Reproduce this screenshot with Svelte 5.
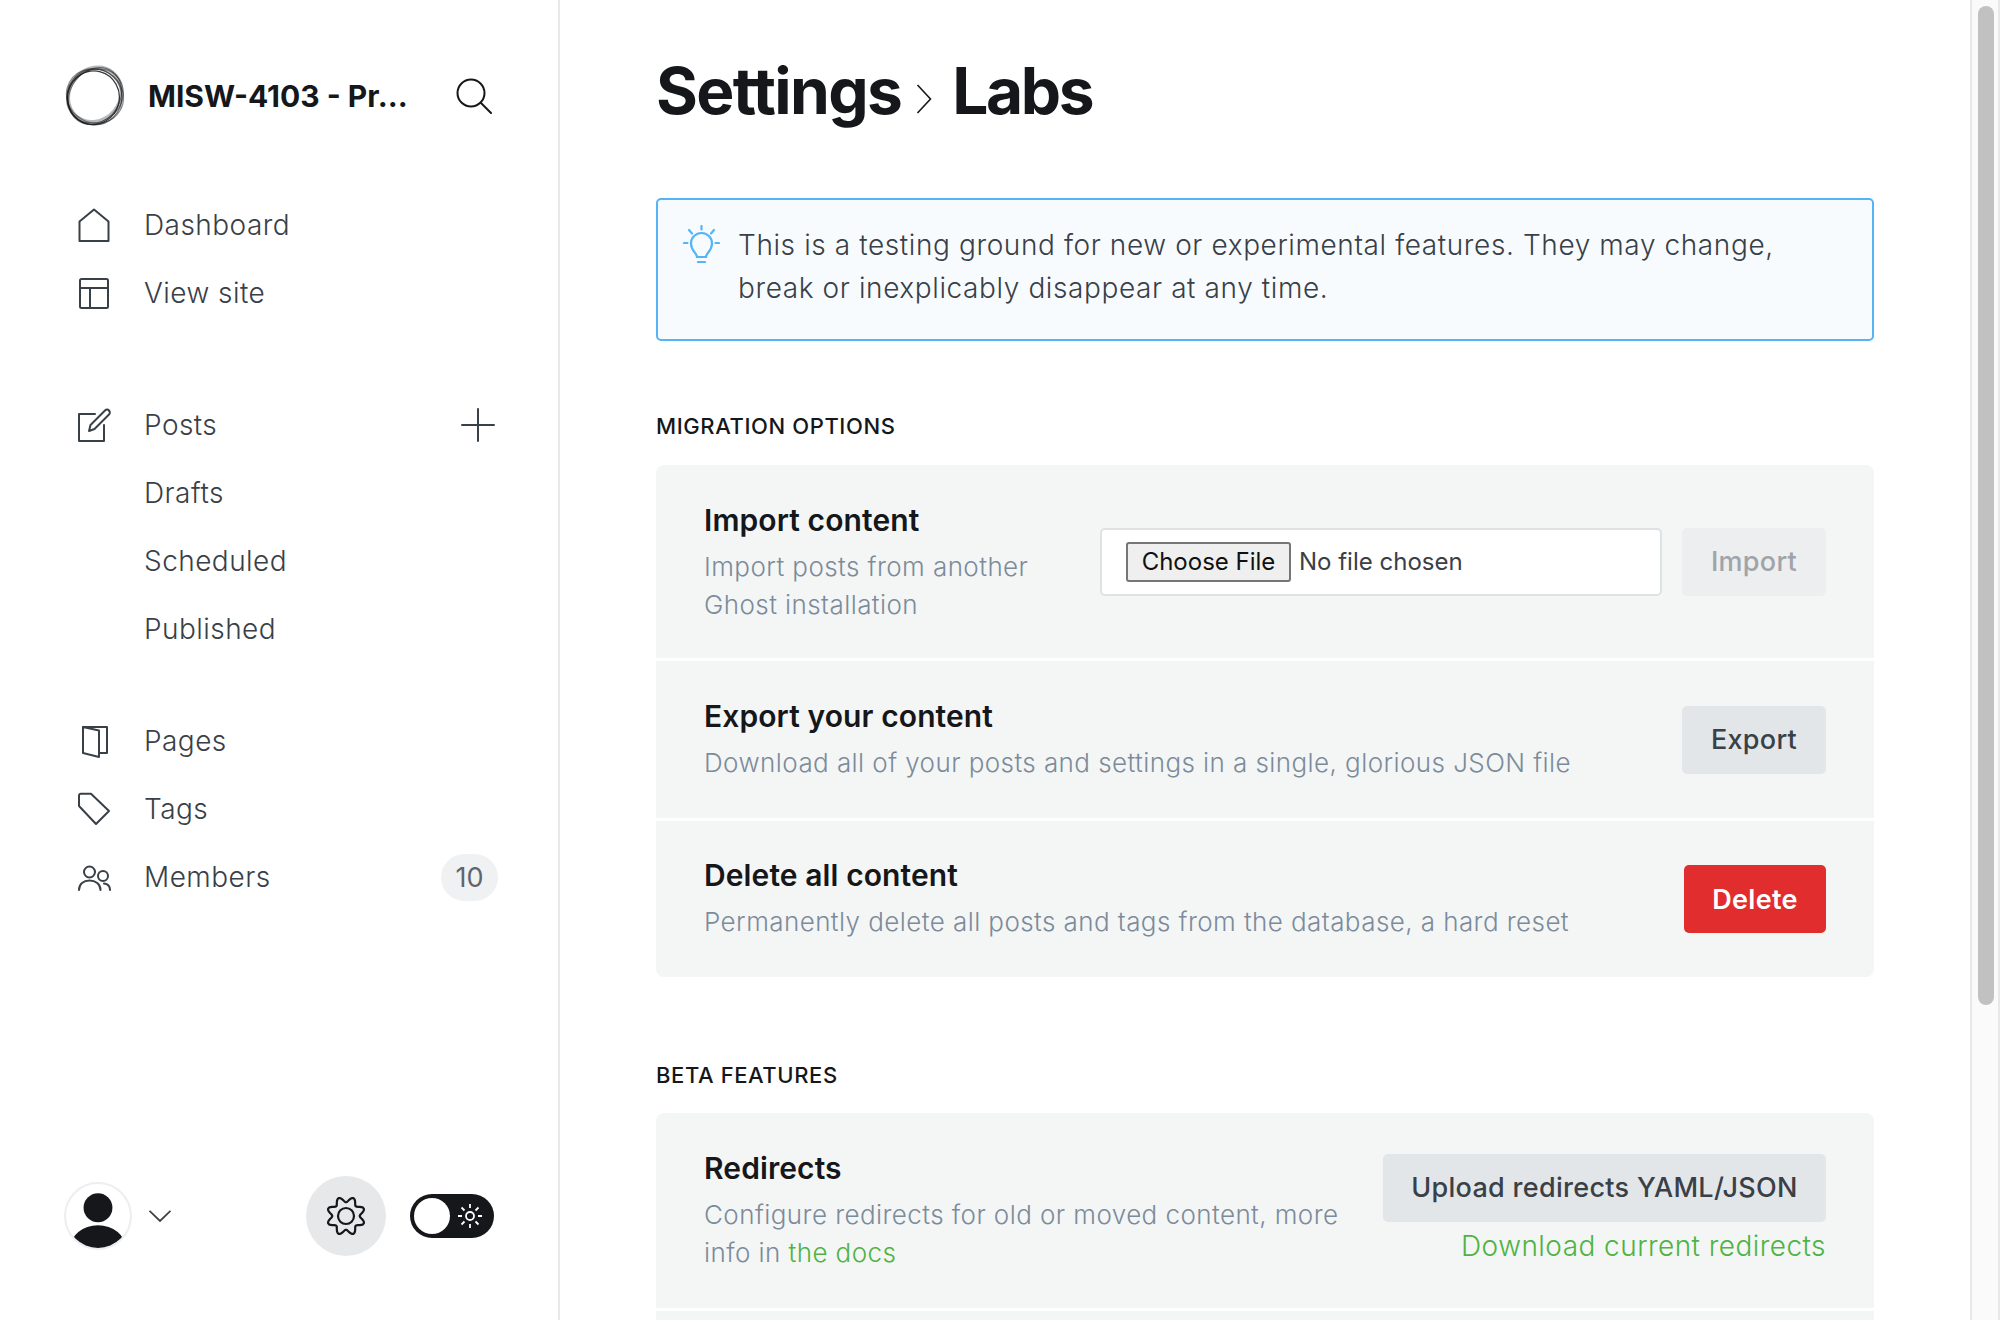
<script>
  const main = [
    { label: "Dashboard", icon: "home" },
    { label: "View site", icon: "layout" },
  ];
  const posts = ["Drafts", "Scheduled", "Published"];
  const lower = [
    { label: "Pages", icon: "pages" },
    { label: "Tags", icon: "tag" },
    { label: "Members", icon: "members", count: 10 },
  ];

  // wavy outline of the settings gear, eight lobes with a notch on top
  const gearPath = Array.from({ length: 96 }, (_, i) => {
    const a = (i / 96) * Math.PI * 2;
    const r = 16.5 - 2.8 * Math.cos(8 * a);
    const x = 21 + r * Math.sin(a);
    const y = 21 - r * Math.cos(a);
    return `${i ? "L" : "M"}${x.toFixed(2)} ${y.toFixed(2)}`;
  }).join("") + "Z";
</script>

{#snippet navIcon(name)}
  <svg class="nav-icon" viewBox="0 0 36 36" fill="none" stroke="currentColor" stroke-width="2" stroke-linejoin="round" stroke-linecap="round">
    {#if name === "home"}
      <path d="M3.5 14.5 18 2.5l14.5 12V34H3.5z" />
    {:else if name === "layout"}
      <rect x="4" y="4" width="28" height="29" rx="1.5" /><path d="M4 13h28M14 13v20" />
    {:else if name === "posts"}
      <path d="M19 7H3v27h25V18" /><path d="M13 24l1.5-6L29 3.5c1.2-1.2 3-1.2 4 0s1.2 3 0 4L18.5 22z" />
    {:else if name === "pages"}
      <path d="M7 4l16 3.5V34L7 30z" /><path d="M7 4h24v26h-8" />
    {:else if name === "tag"}
      <path d="M3 4.5c0-1 .8-1.7 1.7-1.7H15L33 20 20 33 3 15z" />
    {:else if name === "members"}
      <circle cx="13.5" cy="13" r="5.5" /><path d="M3 31c0-6 4.5-9.5 10.5-9.5S24.5 25 24.5 31" /><circle cx="27" cy="17" r="5" /><path d="M28 24.5c4 .5 6 3 6 6.5" />
    {/if}
  </svg>
{/snippet}

<div class="app">
  <aside class="sidebar">
    <header class="brand">
      <svg class="logo" viewBox="0 0 60 60" fill="none" stroke="#15171a">
        <ellipse cx="31" cy="29" rx="27.5" ry="24.5" stroke-width="3.5" transform="rotate(-50 30 30)" opacity=".3" />
        <ellipse cx="30" cy="30" rx="29" ry="24" stroke-width="1" transform="rotate(-55 30 30)" opacity=".5" />
        <ellipse cx="30" cy="30" rx="28.5" ry="25" stroke-width="1" transform="rotate(-35 30 30)" opacity=".5" />
        <ellipse cx="30" cy="30" rx="28" ry="26" stroke-width="1.2" transform="rotate(30 30 30)" opacity=".5" />
        <ellipse cx="29.5" cy="31" rx="26.5" ry="27" stroke-width="1.2" opacity=".6" />
        <ellipse cx="29" cy="32" rx="25" ry="26" stroke-width="1.2" transform="rotate(15 30 30)" opacity=".85" />
      </svg>
      <span class="site-name">MISW-4103 - Pr...</span>
      <svg class="search" viewBox="0 0 36 36" fill="none" stroke="#15171a" stroke-width="2" stroke-linecap="round">
        <circle cx="15" cy="15" r="13.5" /><path d="M25 25l10 10" />
      </svg>
    </header>

    <nav class="group first">
      {#each main as item}
        <div class="row">{@render navIcon(item.icon)}<span>{item.label}</span></div>
      {/each}
    </nav>

    <nav class="group">
      <div class="row">
        {@render navIcon("posts")}<span>Posts</span>
        <svg class="plus" viewBox="0 0 34 34" stroke="currentColor" stroke-width="2" stroke-linecap="round"><path d="M17 1v32M1 17h32" /></svg>
      </div>
      {#each posts as p}
        <div class="row sub"><span>{p}</span></div>
      {/each}
    </nav>

    <nav class="group last">
      {#each lower as item}
        <div class="row">
          {@render navIcon(item.icon)}<span>{item.label}</span>
          {#if item.count}<b class="count">{item.count}</b>{/if}
        </div>
      {/each}
    </nav>

    <footer class="foot">
      <div class="user">
        <svg class="avatar" viewBox="0 0 66 66">
          <defs><clipPath id="ac"><circle cx="33" cy="33" r="31" /></clipPath></defs>
          <circle cx="33" cy="33" r="32" fill="#fff" stroke="#eceef0" stroke-width="2" />
          <g clip-path="url(#ac)" fill="#15171a">
            <circle cx="33" cy="25" r="14" />
            <ellipse cx="33" cy="64" rx="27" ry="22" />
          </g>
        </svg>
        <svg class="caret" viewBox="0 0 22 12" fill="none" stroke="#394047" stroke-width="1.8"><path d="M.5.8 11 11 21.5.8" /></svg>
      </div>
      <div class="gear">
        <svg viewBox="0 0 42 42" fill="none" stroke="#15171a" stroke-width="2.2" stroke-linejoin="round">
          <circle cx="21" cy="21" r="8" />
          <path d={gearPath} />
        </svg>
      </div>
      <div class="toggle">
        <span class="knob"></span>
        <svg viewBox="0 0 24 24" fill="none" stroke="#fff" stroke-width="1.8">
          <circle cx="12" cy="12" r="4" />
          <path d="M12 0v4M12 20v4M0 12h4M20 12h4M3.5 3.5l3 3M17.5 17.5l3 3M3.5 20.5l3-3M17.5 6.5l3-3" />
        </svg>
      </div>
    </footer>
  </aside>

  <main class="content">
    <h1>Settings
      <svg class="crumb" viewBox="0 0 16 30" fill="none" stroke="#15171a" stroke-width="1.6"><path d="M1.5 1 14.5 15 1.5 29" /></svg>
      <span class="leaf">Labs</span></h1>

    <div class="alert">
      <svg viewBox="0 0 37 38" fill="none" stroke="#54b4f5" stroke-width="2.2" stroke-linecap="round">
        <path d="M18.5 1v3.5M6 5l3 3.5M31 5l-3 3.5M1 18h3.5M32.5 18H36" />
        <path d="M14 32c0-4-6-6-6-13.5a10.5 10.5 0 0 1 21 0c0 7.5-6 9.5-6 13.5z" />
        <path d="M15 37h7" />
      </svg>
      <p>This is a testing ground for new or experimental features. They may change, break or inexplicably disappear at any time.</p>
    </div>

    <h2>Migration options</h2>
    <section class="card">
      <div class="item import">
        <div class="text">
          <h3>Import content</h3>
          <p>Import posts from another<br />Ghost installation</p>
        </div>
        <div class="file"><span class="choose">Choose File</span><span class="chosen">No file chosen</span></div>
        <button class="btn disabled">Import</button>
      </div>
      <div class="item">
        <div class="text">
          <h3>Export your content</h3>
          <p>Download all of your posts and settings in a single, glorious JSON file</p>
        </div>
        <button class="btn">Export</button>
      </div>
      <div class="item short">
        <div class="text">
          <h3>Delete all content</h3>
          <p>Permanently delete all posts and tags from the database, a hard reset</p>
        </div>
        <button class="btn red">Delete</button>
      </div>
    </section>

    <h2 class="beta">Beta features</h2>
    <section class="card">
      <div class="item redirects">
        <div class="text">
          <h3>Redirects</h3>
          <p>Configure redirects for old or moved content, more<br />info in <a href="#docs">the docs</a></p>
        </div>
        <div class="actions">
          <button class="btn">Upload redirects YAML/JSON</button>
          <a href="#download">Download current redirects</a>
        </div>
      </div>
      <div class="item"></div>
    </section>
  </main>

  <div class="scrollbar"><span class="thumb"></span></div>
</div>

<style>
  :global(body) {
    margin: 0;
    background: #fff;
    overflow: hidden;
  }

  .app {
    display: flex;
    width: 2000px;
    height: 1320px;
    overflow: hidden;
    font-family: Inter, "Liberation Sans", sans-serif;
    color: #15171a;
  }

  .sidebar {
    box-sizing: border-box;
    width: 560px;
    flex: none;
    height: 100%;
    border-right: 2px solid #e6e9eb;
    padding: 0 60px 0 64px;
    display: flex;
    flex-direction: column;
  }

  .brand {
    display: flex;
    align-items: center;
    height: 62px;
    margin-top: 65px;
  }

  .logo {
    width: 62px;
    height: 62px;
    flex: none;
    margin-right: -2px;
  }

  .site-name {
    margin-left: 24px;
    font-size: 30px;
    font-weight: 700;
    white-space: nowrap;
  }

  .search {
    width: 36px;
    height: 36px;
    margin-left: auto;
    margin-right: 6px;
  }

  .group {
    margin-top: 64px;
  }

  .group.last {
    margin-top: 44px;
  }

  .row {
    display: flex;
    align-items: center;
    height: 68px;
    padding-left: 12px;
    font-size: 28px;
    font-weight: 360;
    color: #394047;
    letter-spacing: 0.45px;
  }

  .row span {
    margin-left: 32px;
  }

  .row.sub span {
    margin-left: 68px;
  }

  .nav-icon {
    width: 36px;
    height: 36px;
    flex: none;
  }

  .plus {
    width: 34px;
    height: 34px;
    margin-left: auto;
    margin-right: 3px;
  }

  .count {
    margin-left: auto;
    width: 57px;
    height: 47px;
    border-radius: 24px;
    background: #eff1f3;
    color: #5d6670;
    font-size: 27px;
    font-weight: 400;
    letter-spacing: 0;
    display: flex;
    align-items: center;
    justify-content: center;
  }

  .foot {
    margin-top: auto;
    margin-bottom: 64px;
    display: flex;
    align-items: center;
  }

  .user {
    display: flex;
    align-items: center;
  }

  .avatar {
    width: 68px;
    height: 68px;
  }

  .caret {
    width: 22px;
    height: 12px;
    margin-left: 17px;
  }

  .gear {
    width: 80px;
    height: 80px;
    border-radius: 50%;
    background: #e6e8ea;
    margin-left: 135px;
    display: flex;
    align-items: center;
    justify-content: center;
  }

  .gear svg {
    width: 42px;
    height: 42px;
  }

  .toggle {
    box-sizing: border-box;
    width: 84px;
    height: 44px;
    margin-left: 24px;
    border-radius: 22px;
    background: #15171a;
    padding: 4px 12px 4px 4px;
    display: flex;
    align-items: center;
    justify-content: space-between;
  }

  .knob {
    width: 36px;
    height: 36px;
    border-radius: 50%;
    background: #fff;
  }

  .toggle svg {
    width: 24px;
    height: 24px;
  }

  .content {
    box-sizing: border-box;
    flex: 1;
    min-width: 0;
    padding: 0 96px;
  }

  h1 {
    margin: 52px 0 0;
    height: 78px;
    font-size: 64px;
    line-height: 78px;
    font-weight: 700;
    letter-spacing: -1.6px;
    display: flex;
    align-items: center;
    gap: 15px;
  }

  .crumb {
    width: 16px;
    height: 30px;
    margin-top: 16px;
    margin-right: 5px;
  }

  .leaf {
    letter-spacing: -2.4px;
  }

  .alert {
    box-sizing: border-box;
    margin-top: 68px;
    height: 143px;
    border: 2px solid #54b4f5;
    border-radius: 5px;
    background: #f8fbfe;
    padding: 24px 60px 0 25px;
    display: flex;
    gap: 18px;
  }

  .alert svg {
    width: 37px;
    height: 38px;
    flex: none;
    margin-top: 1px;
  }

  .alert p {
    margin: 0;
    font-size: 28px;
    font-weight: 360;
    line-height: 43px;
    color: #394047;
    letter-spacing: 0.6px;
  }

  h2 {
    margin: 71px 0 0;
    font-size: 22px;
    line-height: 28px;
    font-weight: 500;
    text-transform: uppercase;
    letter-spacing: 0.6px;
  }

  h2.beta {
    margin-top: 84px;
  }

  .card {
    margin-top: 25px;
    border-radius: 8px;
    background: #fff;
    display: flex;
    flex-direction: column;
    gap: 3px;
    overflow: hidden;
  }

  .beta + .card {
    margin-top: 24px;
  }

  .item {
    box-sizing: border-box;
    min-height: 157px;
    background: #f4f6f6;
    padding: 0 48px;
    display: flex;
    align-items: center;
    justify-content: space-between;
  }

  .item.short {
    min-height: 156px;
  }

  .item.import {
    height: 193px;
    gap: 20px;
  }

  .item.redirects {
    height: 195px;
  }

  .text {
    flex: 1;
  }

  .import .text {
    margin-top: 4px;
  }

  .import h3 {
    margin-top: -1px;
  }

  h3 {
    margin: 0;
    font-size: 30px;
    line-height: 36px;
    font-weight: 600;
    letter-spacing: 0.1px;
  }

  .text p {
    margin: 10px 0 0;
    font-size: 26px;
    font-weight: 360;
    line-height: 38px;
    color: #7c8b9a;
    letter-spacing: 0.42px;
  }

  .text a {
    color: #4fb343;
    text-decoration: none;
  }

  .file {
    box-sizing: border-box;
    width: 562px;
    height: 68px;
    background: #fff;
    border: 2px solid #dfe2e4;
    border-radius: 5px;
    padding: 0 0 0 24px;
    display: flex;
    align-items: center;
    font-size: 24px;
    color: #394047;
  }

  .choose {
    box-sizing: border-box;
    width: 165px;
    height: 40px;
    border: 2px solid #767676;
    border-radius: 3px;
    background: #efefef;
    color: #111;
    display: flex;
    align-items: center;
    justify-content: center;
  }

  .chosen {
    margin-left: 8px;
  }

  .btn {
    box-sizing: border-box;
    height: 68px;
    width: 144px;
    flex: none;
    border: 0;
    border-radius: 5px;
    background: #e3e6e9;
    color: #394047;
    font: 550 27px Inter, "Liberation Sans", sans-serif;
    letter-spacing: 0.3px;
    padding: 0;
  }

  .btn.disabled {
    background: #eceef0;
    color: #a0a4a8;
  }

  .btn.red {
    width: 142px;
    background: #e12d2d;
    color: #fff;
    font-weight: 600;
  }

  .redirects .text {
    flex: none;
  }

  .actions {
    display: flex;
    flex-direction: column;
    align-items: flex-end;
    gap: 5px;
    margin-top: -3px;
  }

  .actions .btn {
    width: 443px;
  }

  .actions a {
    font-size: 28px;
    font-weight: 360;
    line-height: 38px;
    color: #4fb343;
    text-decoration: none;
    letter-spacing: 0.45px;
  }

  .scrollbar {
    box-sizing: border-box;
    width: 30px;
    flex: none;
    height: 100%;
    background: #fafafa;
    border-left: 2px solid #e8e8e8;
    border-right: 2px solid #e8e8e8;
    padding: 6px 4px 0 6px;
  }

  .thumb {
    display: block;
    height: 999px;
    border-radius: 8px;
    background: #c1c1c1;
  }
</style>
